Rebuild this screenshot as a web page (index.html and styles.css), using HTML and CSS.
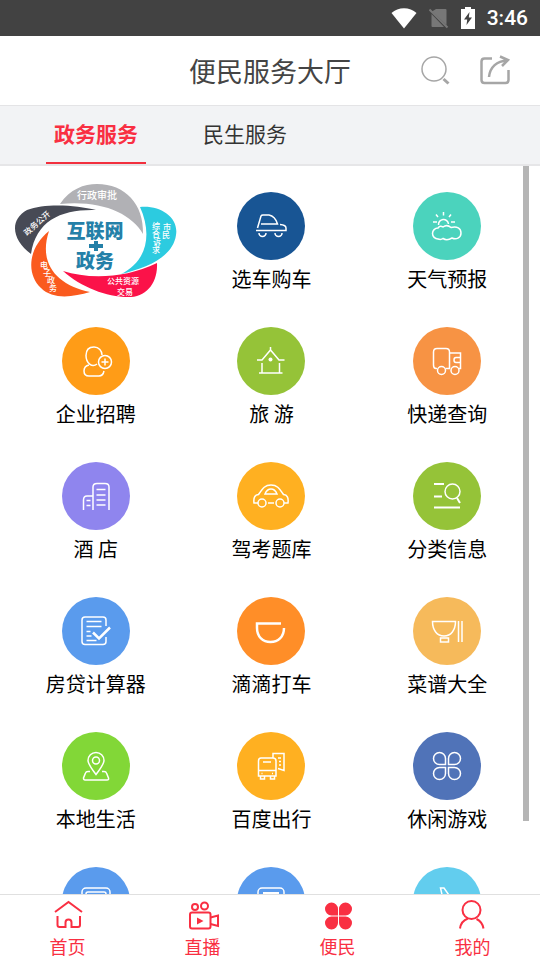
FILE: index.html
```
<!DOCTYPE html>
<html lang="zh-CN">

<head>
  <meta charset="UTF-8" />
  <meta name="viewport" content="width=device-width, initial-scale=1.0">
  <title>便民服务大厅</title>
  <link rel="stylesheet" href="styles.css">
</head>

<body>
  <div class="statusbar">
    <svg width="26" height="22" viewBox="0 0 26 22"><path d="M0.5 6C7-0.5 19-0.5 25.5 6L13 21.5Z" fill="#fff" /></svg>
    <svg width="20" height="22" viewBox="0 0 20 22">
      <path d="M7 2h9.500q1 0 1 1v15L3 4.500ZM2.500 7L15 20H3.500q-1 0-1-1Z" fill="#777" />
      <path d="M0.500 2.500L18.500 20.500" stroke="#777" stroke-width="2" />
    </svg>
    <svg width="14" height="22" viewBox="0 0 14 22">
      <path d="M4 0h6v2h4v20H0V2h4Z" fill="#fff" />
      <path d="M8.500 5L3 12.500h3.200L5.500 18L11 10.500H7.800Z" fill="#424242" />
    </svg>
    <span class="clock">3:46</span>
  </div>

  <header class="topbar">
    <h1>便民服务大厅</h1>
    <div class="actions">
      <button type="button" aria-label="搜索">
        <svg width="30" height="32" viewBox="0 0 30 32">
          <circle cx="14" cy="14" r="12" stroke-width="1.500" />
          <path d="M23.500 24l5 4.500" stroke-width="3" />
        </svg>
      </button>
      <button type="button" aria-label="分享">
        <svg width="30" height="32" viewBox="0 0 30 32">
          <path d="M12 3.500H4.500Q1.500 3.500 1.500 6.500V25Q1.500 28 4.500 28H25.500Q28.500 28 28.500 25V15" stroke-width="2.500" />
          <path d="M9 22C10 12 17 6 27 5.500M20 1.500l8 3.500l-6 6" stroke-width="2.500" />
        </svg>
      </button>
    </div>
  </header>

  <div class="tabs">
    <button type="button" class="tab active">政务服务</button>
    <button type="button" class="tab">民生服务</button>
  </div>

  <main class="main-content">
    <div class="services">
      <a href="#" class="service banner" aria-label="互联网+政务">
        <svg width="164" height="120" viewBox="14 10 164 120">
          <path d="M60 34C70 19 84 14 97 14C125 14 144 34 143 64C131 43 101 30 60 34Z" fill="#b1b1b5" />
          <path d="M31 84C12 70 9 50 27 40C45 33 76 35 96 40C62 39 36 50 31 84Z" fill="#474a55" />
          <path d="M49 61C28 78 26 104 41 118C53 130 73 127 90 122C57 115 38 94 49 61Z" fill="#fa5a1e" />
          <path d="M63 101C88 109 124 109 157 93C158 111 148 126 131 127C109 128 82 118 63 101Z" fill="#fb1249" />
          <path d="M140 37C161 35 179 48 176 65C173 87 147 98 121 104C146 92 153 66 140 37Z" fill="#2ccbe0" />
          <g class="banner-title">
            <text x="95" y="68">互联网</text>
            <text x="95" y="98">政务</text>
            <path d="M89 76h14M96 71v10" stroke="#2480a8" stroke-width="4" />
          </g>
          <g class="banner-text">
            <text class="wide" x="97" y="29">行政审批</text>
            <text x="37" y="56" transform="rotate(-42 37 53)">政务公开</text>
            <text x="44 47 51 53" y="98 106 113 121">电子政务</text>
            <text x="156 156 157 156" y="59 67 75 83">综合诉求</text>
            <text x="167 166" y="60 68">市民</text>
            <text x="123" y="114">公共资源</text>
            <text x="125" y="125">交易</text>
          </g>
        </svg>
      </a>

      <a href="#" class="service">
        <svg class="icon navy" viewBox="0 0 68 68">
          <path d="M20.500 36L24 24Q24.500 23 26 23H32Q38 24 40.500 32H24M43 32.500Q49 33 49 36V38.500H19M22 41a3.500 3.500 0 0 0 7 0M38 41a3.500 3.500 0 0 0 7 0" />
        </svg>
        <span>选车购车</span>
      </a>

      <a href="#" class="service">
        <svg class="icon teal" viewBox="0 0 68 68">
          <path d="M25.500 33a5 5 0 0 1 10-1M30.500 20v3.500M23 22.500l2 2.500M38 22.500l-2 2.500M20 30h4M38 30h4" />
          <path d="M25 47a5.500 5.500 0 0 1 0-11Q27 33 30 35Q34 32 38 35.500C44 34 48 36 48 41C48 46 43 48 39 46Q34 49 30 46.500Q28 48 25 47Z" />
        </svg>
        <span>天气预报</span>
      </a>

      <a href="#" class="service">
        <svg class="icon orange" viewBox="0 0 68 68">
          <path d="M35 37C30 41 24 36 24 28.500C24 23 27 20 32 20C37 20 40 24 40 28M27 38Q22 39 22 44Q22 49 27 49H37Q41 49 42 44" />
          <circle cx="43" cy="35" r="6.500" />
          <path d="M43 31.500v7M39.500 35h7" />
        </svg>
        <span>企业招聘</span>
      </a>

      <a href="#" class="service">
        <svg class="icon green" viewBox="0 0 68 68">
          <path d="M33.500 20v3M20 33h5L33.500 23L42 33h5.500M25 36v10M42.500 36v10M22 46h23.500" />
          <circle cx="33.500" cy="32.500" r="2" class="solid" />
        </svg>
        <span>旅 游</span>
      </a>

      <a href="#" class="service">
        <svg class="icon coral" viewBox="0 0 68 68">
          <path d="M24 41.500H23Q20.500 41.500 20.500 38V25Q20.500 21.500 24 21.500H33Q36.500 21.500 36.500 25V41.500H32.500M36.500 26H47.500V41.500H46M47.500 30.500H43Q41 30.500 41 33T43 35.500H47.500" />
          <circle cx="28.500" cy="43.500" r="4" />
          <circle cx="42" cy="43.500" r="4" />
        </svg>
        <span>快递查询</span>
      </a>

      <a href="#" class="service">
        <svg class="icon purple" viewBox="0 0 68 68">
          <path d="M31 48V25Q31 21.500 35 21.500H43Q47 21.500 47 25V48M21.500 48V38Q21.500 34 25 34H31M34.500 27.500h9M34.500 33h9M34.500 38h9M34.500 43h9M24.500 38.500h4M24.500 43.500h4" />
        </svg>
        <span>酒 店</span>
      </a>

      <a href="#" class="service">
        <svg class="icon amber" viewBox="0 0 68 68">
          <path d="M21 41H17Q16 33 21.500 32.500C26 26 28 23 34 23S42 26 46.500 32.500Q52 33 51 41H47M31 41h6M28 32Q30 27 34 27T40 32Z" />
          <circle cx="25" cy="41" r="4" />
          <circle cx="43" cy="41" r="4" />
        </svg>
        <span>驾考题库</span>
      </a>

      <a href="#" class="service">
        <svg class="icon green" viewBox="0 0 68 68">
          <path d="M21 22h10M21 34.500h8M21 45.500h26M44 36l3 5" stroke-width="2" />
          <circle cx="39.500" cy="29.500" r="7.500" />
        </svg>
        <span>分类信息</span>
      </a>

      <a href="#" class="service">
        <svg class="icon blue" viewBox="0 0 68 68">
          <path d="M44 29V23Q44 20 41 20H23Q20 20 20 23V44.500Q20 47.500 23 47.500H41Q44 47.500 44 44.500V40M24.500 24.500h15M24.500 29.500h15M24.500 34.500h4M24.500 39h5M24.500 43.500h10" />
          <path d="M31 35.500l6 6L48 30.500" stroke-width="2.500" />
        </svg>
        <span>房贷计算器</span>
      </a>

      <a href="#" class="service">
        <svg class="icon tangerine" viewBox="0 0 68 68">
          <path d="M44 26.500H20V31C20 40 26 45 33.500 45S47 40 47 31" stroke-width="2.500" />
        </svg>
        <span>滴滴打车</span>
      </a>

      <a href="#" class="service">
        <svg class="icon sand" viewBox="0 0 68 68">
          <path d="M19.500 24.500H42.500C42.500 33 38 39 31 39S19.500 33 19.500 24.500ZM27.500 41h8v4h-8ZM45.500 24v21M49 24v21" />
        </svg>
        <span>菜谱大全</span>
      </a>

      <a href="#" class="service">
        <svg class="icon lime" viewBox="0 0 68 68">
          <path d="M34 42.500C29 36 26 32 26 28.500a8 8 0 0 1 16 0C42 32 39 36 34 42.500ZM28 39.500H26Q24 39.500 23.500 41L21.500 46Q21.500 48 23 48H45Q47 48 46.500 46L44.500 41Q44 39.500 42 39.500H40" />
          <circle cx="34" cy="28.500" r="3.500" />
        </svg>
        <span>本地生活</span>
      </a>

      <a href="#" class="service">
        <svg class="icon amber" viewBox="0 0 68 68">
          <path d="M24 26H36Q39 26 39 29V44H21.500V29Q21.500 26 24 26ZM21.500 38.500H39M26 30h8M23.500 44v3h4v-3M33.500 44v3h4v-3M24.500 41.500h1M35 41.500h1M36 26V21.500H47V38.500L41 36.500M41 26h3M42 29.500h2M42 33h2" />
        </svg>
        <span>百度出行</span>
      </a>

      <a href="#" class="service">
        <svg class="icon indigo" viewBox="0 0 68 68">
          <path d="M32.500 32.500V26.500a6 6 0 1 0-6 6ZM35.500 32.500V26.500a6 6 0 1 1 6 6ZM32.500 35.500V41.500a6 6 0 1 1-6-6ZM35.500 35.500V41.500a6 6 0 1 0 6-6Z" />
        </svg>
        <span>休闲游戏</span>
      </a>

      <a href="#" class="service" aria-label="公交">
        <svg class="icon blue" viewBox="0 0 68 68">
          <rect x="20" y="21" width="28" height="26" rx="4" />
          <rect x="24" y="25" width="20" height="14" rx="2" />
        </svg>
      </a>

      <a href="#" class="service" aria-label="火车">
        <svg class="icon blue" viewBox="0 0 68 68">
          <rect x="21" y="21" width="26" height="26" rx="4" />
          <path d="M26 26h16" stroke-width="2" />
        </svg>
      </a>

      <a href="#" class="service" aria-label="机票">
        <svg class="icon sky" viewBox="0 0 68 68">
          <path d="M30 32L27.500 21H31L38 31H45Q49 33 45 35H38L31 45H28L30 35L21 34L19 28H22L25 31Z" />
        </svg>
      </a>
    </div>
    <div class="scrollbar"></div>
  </main>

  <nav class="bottombar">
    <a href="#">
      <svg width="32" height="32" viewBox="0 0 32 32">
        <path d="M3 12L16.500 2L30 12M5.500 16V25Q5.500 27 7.500 27H13.500V22.500a3 3 0 0 1 6 0V27H26Q28 27 28 25V16" />
      </svg>
      首页
    </a>
    <a href="#">
      <svg width="32" height="32" viewBox="0 0 32 32">
        <circle cx="8" cy="7" r="3" />
        <circle cx="17.500" cy="6" r="3.500" />
        <rect x="3" y="12.500" width="20.500" height="16" rx="2" />
        <path d="M23.500 17.500L31 15.500V26L23.500 24" />
        <path d="M10 17.500L16.500 21L10 24.500Z" class="solid" />
      </svg>
      直播
    </a>
    <a href="#">
      <svg width="32" height="32" viewBox="0 0 32 32">
        <path d="M16 15.500V9a6.500 6.500 0 1 0-6.500 6.500ZM17 15.500V9a6.500 6.500 0 1 1 6.500 6.500ZM16 16.500V23a6.500 6.500 0 1 1-6.500-6.500ZM17 16.500V23a6.500 6.500 0 1 0 6.500-6.500Z" class="solid" />
      </svg>
      便民
    </a>
    <a href="#">
      <svg width="32" height="32" viewBox="0 0 32 32">
        <circle cx="14.500" cy="10" r="9" />
        <path d="M11 18.500Q4 21 3 28.500M19.500 19Q25.500 22 26.500 28.500" />
      </svg>
      我的
    </a>
  </nav>
</body>

</html>
```
FILE: styles.css
```
* {
  margin: 0;
  padding: 0;
  box-sizing: border-box;
  font-family: "Noto Sans CJK SC", sans-serif;
}

body {
  display: flex;
  flex-direction: column;
  height: 100vh;
  background-color: #fff;
  color: #000;
}

a {
  text-decoration: none;
  color: inherit;
}

button {
  border: none;
  background: none;
  cursor: pointer;
}

svg {
  display: block;
}

.statusbar {
  display: flex;
  flex-shrink: 0;
  align-items: center;
  justify-content: flex-end;
  gap: 12px;
  height: 36px;
  padding: 0 12px;
  background-color: #424242;
}

.clock {
  font-family: Roboto, sans-serif;
  font-size: 21px;
  font-weight: 500;
  color: #fff;
}

.topbar {
  display: grid;
  flex-shrink: 0;
  grid-template-columns: 1fr auto 1fr;
  align-items: center;
  height: 70px;
  padding: 0 30px;
  border-bottom: 1px solid #e4e4e6;
}

.topbar h1 {
  grid-column: 2;
  font-size: 27px;
  font-weight: 400;
  line-height: 36px;
  color: #444;
}

.actions {
  display: flex;
  justify-content: flex-end;
  gap: 30px;
}

.actions svg {
  fill: none;
  stroke: #a6a6a6;
}

/* Tabs */
.tabs {
  display: flex;
  flex-shrink: 0;
  gap: 49px;
  height: 60px;
  padding: 0 46px;
  background-color: #f2f3f5;
  border-bottom: 2px solid #e6e6e8;
}

.tab {
  padding: 0 8px 2px;
  border-bottom: 2px solid transparent;
  font-size: 21px;
  color: #333;
}

.tab.active {
  border-bottom-color: #f2303e;
  font-weight: 700;
  color: #f92f42;
}

/* Service grid */
.main-content {
  position: relative;
  flex: 1;
  min-height: 0;
  overflow: hidden;
}

.services {
  display: grid;
  grid-template-columns: repeat(3, 1fr);
  grid-auto-rows: 135px;
  padding: 14px 5px 0 8px;
}

.service {
  display: flex;
  flex-direction: column;
  align-items: center;
  padding-top: 12px;
  font-size: 20px;
  line-height: 38px;
  white-space: nowrap;
}

.service.banner {
  padding-top: 0;
}

.banner-title text {
  font-size: 19px;
  font-weight: 900;
  fill: #2480a8;
  text-anchor: middle;
}

.banner-text text {
  font-size: 8px;
  font-weight: 500;
  fill: #fff;
  text-anchor: middle;
}

.banner-text .wide {
  font-size: 10px;
}

.icon {
  width: 68px;
  height: 68px;
  border-radius: 50%;
  fill: none;
  stroke: #fff;
  stroke-width: 1.5;
}

.icon .solid {
  fill: #fff;
  stroke: none;
}

.navy { background-color: #185594; }
.teal { background-color: #4bd3bd; }
.orange { background-color: #ff9c17; }
.green { background-color: #95c338; }
.coral { background-color: #f79344; }
.purple { background-color: #8f85ee; }
.amber { background-color: #ffb021; }
.blue { background-color: #5a9bed; }
.tangerine { background-color: #ff8e28; }
.sand { background-color: #f6ba5b; }
.lime { background-color: #82d737; }
.indigo { background-color: #5073b8; }
.sky { background-color: #62cdee; }

.scrollbar {
  position: absolute;
  top: 0;
  right: 11px;
  width: 6px;
  height: 90%;
  background-color: #b5b5b5;
}

/* Bottom navigation */
.bottombar {
  display: flex;
  flex-shrink: 0;
  height: 66px;
  padding-top: 5px;
  border-top: 1px solid #e0e0e0;
  background-color: #fff;
}

.bottombar a {
  display: flex;
  flex: 1;
  flex-direction: column;
  align-items: center;
  font-size: 18px;
  line-height: 28px;
  color: #f92f42;
}

.bottombar svg {
  fill: none;
  stroke: #f92f42;
  stroke-width: 2;
}

.bottombar .solid {
  fill: #f92f42;
  stroke: none;
}
```
